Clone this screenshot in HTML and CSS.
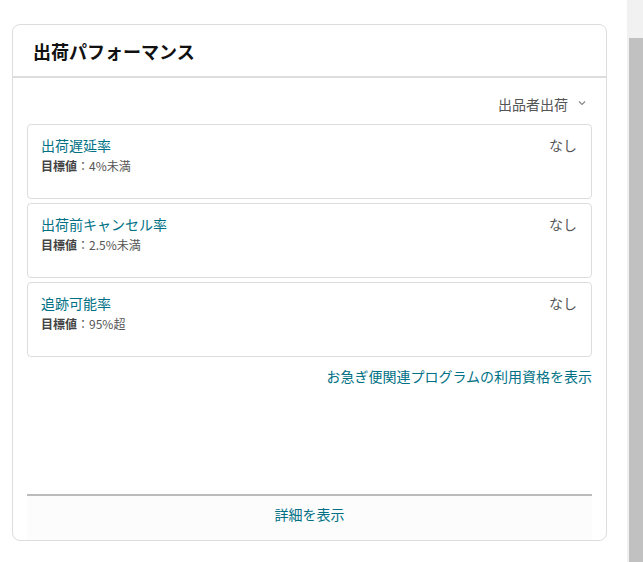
FILE: index.html
```html
<!DOCTYPE html>
<html lang="ja">

<head>
    <meta charset="UTF-8">
    <title>出荷パフォーマンス</title>
    <link rel="stylesheet" href="styles.css">
</head>

<body>
    <div class="page">
        <div class="main">
            <div class="card">
                <div class="card-header">
                    <h3>出荷パフォーマンス</h3>
                </div>
                <div class="card-body">
                    <div class="filter">
                        <span>出品者出荷</span>
                        <svg class="chevron" width="8" height="6" viewBox="0 0 8 6">
                            <path d="M1 1.5 L4 4.5 L7 1.5" fill="none" stroke="#888" stroke-width="1.2" />
                        </svg>
                    </div>
                    <div class="metric">
                        <div class="metric-info">
                            <a class="link" href="#">出荷遅延率</a>
                            <div class="target"><b>目標値</b>：4%未満</div>
                        </div>
                        <div class="value">なし</div>
                    </div>
                    <div class="metric">
                        <div class="metric-info">
                            <a class="link" href="#">出荷前キャンセル率</a>
                            <div class="target"><b>目標値</b>：2.5%未満</div>
                        </div>
                        <div class="value">なし</div>
                    </div>
                    <div class="metric">
                        <div class="metric-info">
                            <a class="link" href="#">追跡可能率</a>
                            <div class="target"><b>目標値</b>：95%超</div>
                        </div>
                        <div class="value">なし</div>
                    </div>
                    <div class="program">
                        <a class="link" href="#">お急ぎ便関連プログラムの利用資格を表示</a>
                    </div>
                </div>
                <div class="card-footer">
                    <a class="link" href="#">詳細を表示</a>
                </div>
            </div>
        </div>
        <div class="scrollbar">
            <div class="thumb"></div>
        </div>
    </div>
</body>

</html>
```

FILE: styles.css
```css
body {
    font-family: "Noto Sans CJK JP", "Liberation Sans", sans-serif;
    margin: 0;
    padding: 0;
    background: white;
    color: #333;
}

.page {
    display: flex;
    height: 562px;
    overflow: hidden;
}

.main {
    flex: 1;
    padding: 24px 20px 0 12px;
}

.card {
    border: 1px solid #ddd;
    border-radius: 8px;
    height: 517px;
    display: flex;
    flex-direction: column;
    box-sizing: border-box;
}

.card-header {
    height: 53px;
    border-bottom: 2px solid #ddd;
    padding: 0 20px;
    display: flex;
    align-items: center;
    box-sizing: border-box;
}

h3 {
    margin: 0;
    font-size: 18px;
    font-weight: bold;
    color: #111;
    line-height: 1;
}

.card-body {
    flex: 1;
    padding: 16px 14px 0 14px;
    display: flex;
    flex-direction: column;
}

.filter {
    display: flex;
    justify-content: flex-end;
    align-items: center;
    gap: 10px;
    font-size: 14px;
    color: #555;
    height: 20px;
    padding-right: 6px;
    margin-bottom: 10px;
}

.chevron {
    margin-top: -3px;
}

.metric {
    display: flex;
    justify-content: space-between;
    align-items: flex-start;
    height: 75px;
    box-sizing: border-box;
    border: 1px solid #ddd;
    border-radius: 4px;
    padding: 10px 14px 0 13px;
    margin-bottom: 4px;
}

.link {
    color: #007185;
    text-decoration: none;
    font-size: 14px;
}

.metric-info {
    display: flex;
    flex-direction: column;
}

.metric-info .link {
    line-height: 20px;
}

.target {
    font-size: 12px;
    color: #555;
    line-height: 18px;
    margin-top: 2px;
}

.target b {
    color: #444;
}

.value {
    font-size: 14px;
    color: #555;
    line-height: 20px;
}

.program {
    text-align: right;
    line-height: 20px;
    margin-top: 4px;
}

.card-footer {
    margin: 0 14px;
    border-top: 2px solid #bbb;
    height: 46px;
    box-sizing: border-box;
    padding-top: 7px;
    line-height: 20px;
    text-align: center;
    background: #fcfcfc;
}

.scrollbar {
    width: 16px;
    background: #f1f1f1;
    display: flex;
    flex-direction: column;
}

.thumb {
    flex: 1;
    margin: 38px 0 0 2px;
    background: #c1c1c1;
}
```
